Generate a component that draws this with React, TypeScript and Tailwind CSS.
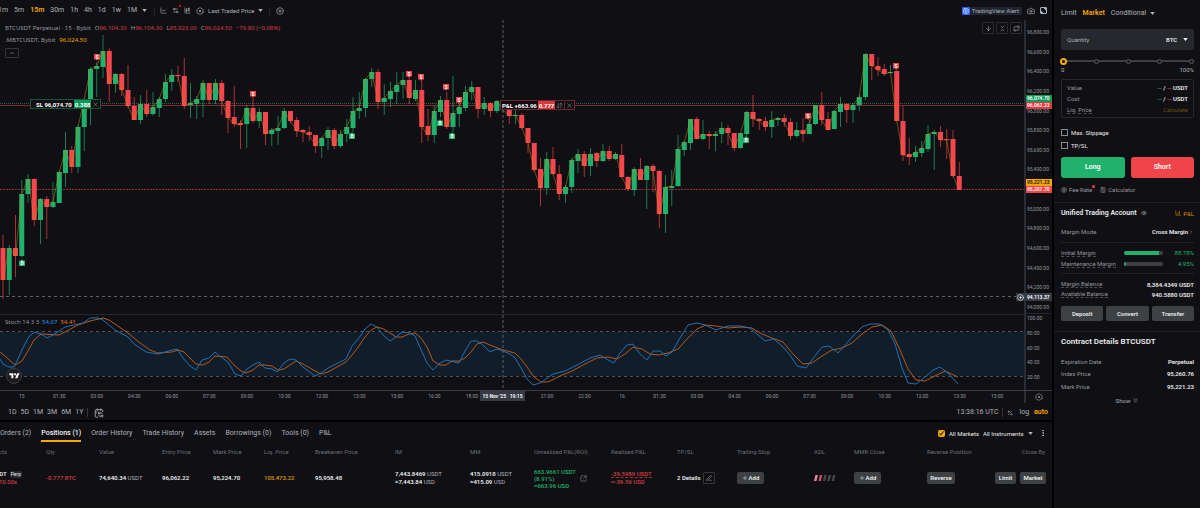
import { useState } from "react";
import type { ReactNode } from "react";
import {
  Calculator,
  CalendarSync,
  Camera,
  ChartCandlestick,
  ChartLine,
  ChevronRight,
  ChevronUp,
  ChevronsDown,
  ChevronsDownUp,
  CirclePlus,
  CircleDollarSign,
  ArrowDown,
  ArrowDownUp,
  EllipsisVertical,
  Eye,
  Grid2x2,
  Hexagon,
  Percent,
  Plus,
  Repeat,
  Settings2,
  SquareArrowOutUpRight,
  PenLine,
  ChartColumnIncreasing,
  X,
} from "lucide-react";

// high, body top, body bottom, low, direction (1 = up, 0 = down)
const candles: number[][] = [
  [235, 248, 280, 299, 0], [245, 248, 280, 295, 1], [215, 248, 256, 277, 0], [180, 194, 256, 257, 1],
  [174, 179, 194, 203, 1], [178, 179, 220, 226, 0], [198, 199, 220, 244, 1], [196, 199, 207, 239, 0],
  [182, 202, 207, 208, 1], [171, 172, 203, 203, 1], [132, 150, 173, 187, 1], [146, 150, 167, 173, 0],
  [125, 127, 167, 173, 1], [98, 99, 127, 151, 1], [67, 69, 99, 125, 1], [62, 66, 69, 97, 1],
  [35, 51, 67, 78, 1], [48, 51, 84, 102, 0], [73, 74, 84, 93, 1], [73, 74, 90, 96, 0],
  [65, 90, 106, 108, 0], [97, 106, 120, 120, 0], [95, 104, 120, 124, 1], [90, 104, 114, 117, 0],
  [92, 107, 114, 116, 1], [97, 99, 108, 117, 1], [74, 82, 99, 102, 1], [69, 75, 82, 91, 1],
  [66, 75, 76, 82, 0], [58, 76, 106, 109, 0], [83, 103, 105, 118, 1], [96, 99, 104, 119, 1],
  [80, 83, 100, 117, 1], [83, 83, 100, 104, 0], [79, 83, 100, 104, 1], [80, 83, 101, 115, 0],
  [100, 101, 118, 133, 0], [86, 117, 124, 127, 0], [120, 123, 125, 149, 0], [105, 108, 124, 148, 1],
  [98, 108, 121, 123, 0], [108, 112, 121, 128, 1], [112, 112, 134, 145, 0], [128, 130, 134, 146, 1],
  [116, 128, 131, 145, 1], [108, 111, 128, 129, 1], [111, 111, 121, 123, 0], [117, 120, 131, 137, 0],
  [129, 130, 132, 142, 0], [126, 132, 135, 141, 0], [135, 135, 146, 153, 0], [137, 138, 146, 158, 1],
  [127, 130, 138, 150, 1], [128, 130, 146, 149, 0], [130, 134, 146, 148, 1], [119, 127, 134, 142, 1],
  [97, 111, 128, 132, 1], [92, 108, 111, 119, 1], [78, 79, 108, 117, 1], [68, 72, 79, 87, 1],
  [69, 72, 102, 109, 0], [84, 98, 102, 115, 1], [82, 91, 99, 107, 1], [72, 85, 92, 104, 1],
  [72, 80, 85, 99, 1], [77, 80, 98, 104, 0], [80, 90, 99, 101, 1], [77, 90, 127, 143, 0],
  [109, 126, 135, 141, 0], [106, 111, 135, 143, 1], [96, 100, 112, 117, 1], [92, 100, 127, 129, 0],
  [76, 113, 127, 132, 1], [103, 107, 114, 127, 1], [86, 92, 108, 111, 1], [81, 87, 92, 100, 1],
  [87, 87, 109, 118, 0], [97, 103, 109, 115, 1], [102, 103, 111, 117, 0], [100, 101, 111, 113, 1],
  [100, 101, 110, 112, 0], [109, 110, 116, 124, 0], [109, 115, 116, 124, 1], [113, 115, 128, 129, 0],
  [128, 128, 143, 153, 0], [143, 143, 170, 172, 0], [158, 169, 188, 206, 0], [152, 159, 188, 195, 1],
  [147, 159, 174, 175, 0], [165, 174, 194, 200, 0], [185, 187, 194, 203, 1], [158, 160, 187, 193, 1],
  [149, 154, 161, 173, 1], [151, 154, 166, 177, 0], [148, 154, 166, 176, 1], [152, 153, 161, 167, 0],
  [144, 151, 161, 162, 1], [146, 151, 159, 161, 0], [152, 154, 159, 160, 1], [144, 155, 177, 178, 0],
  [176, 177, 189, 191, 0], [167, 169, 190, 196, 1], [158, 169, 180, 180, 0], [165, 166, 180, 209, 1],
  [164, 166, 171, 192, 0], [170, 171, 214, 228, 0], [175, 187, 214, 233, 1], [170, 186, 188, 206, 1],
  [135, 149, 186, 187, 1], [141, 142, 150, 156, 1], [119, 119, 143, 150, 1], [117, 119, 139, 139, 0],
  [120, 134, 139, 140, 1], [131, 134, 136, 149, 0], [131, 134, 136, 151, 1], [122, 128, 134, 143, 1],
  [125, 128, 133, 145, 0], [133, 133, 148, 151, 0], [133, 133, 148, 149, 1], [111, 112, 134, 137, 1],
  [95, 112, 119, 127, 0], [118, 119, 121, 130, 0], [117, 121, 127, 131, 0], [111, 120, 127, 138, 1],
  [117, 118, 120, 126, 1], [114, 118, 122, 127, 0], [118, 122, 136, 140, 0], [122, 130, 136, 138, 1],
  [118, 130, 134, 142, 0], [119, 124, 134, 134, 1], [105, 105, 124, 125, 1], [92, 105, 120, 125, 0],
  [112, 119, 130, 130, 0], [110, 111, 129, 129, 1], [97, 104, 112, 127, 1], [103, 104, 110, 123, 0],
  [103, 105, 110, 123, 1], [95, 97, 105, 111, 1], [53, 54, 97, 100, 1], [54, 54, 66, 80, 0],
  [57, 66, 70, 76, 0], [64, 69, 74, 76, 0], [65, 72, 73, 74, 1], [69, 71, 121, 121, 0],
  [106, 121, 155, 161, 0], [138, 154, 157, 165, 0], [146, 152, 157, 162, 1], [141, 148, 153, 157, 1],
  [125, 134, 149, 152, 1], [130, 132, 134, 170, 1], [126, 132, 140, 147, 0], [129, 139, 140, 159, 0],
  [130, 139, 176, 177, 0], [162, 176, 190, 190, 0],
];

const candleX = (i: number) => 3 + i * 6.25;

const closeLine = candles
  .map(([, top, bottom, , up], i) => `${candleX(i)},${up ? top : bottom}`)
  .join(" ");

const sellMarks = [[97, 57], [253, 94], [409, 74], [421, 77], [446, 87], [459, 100], [808, 116], [896, 66]];
const buyMarks = [[22, 263], [352, 136], [440, 123], [452, 136], [746, 140]];

const stochK =
  "0,359 3,364 9,367 14,367 16,363 22,350 28,338 34,332 41,334 47,338 53,335 65,327 83,323 90,318 98,318 103,320 115,330 128,337 134,344 146,352 158,354 172,350 177,349 183,358 190,366 196,370 202,360 209,358 215,352 221,357 228,362 235,374 241,376 247,369 253,365 259,362 265,368 272,369 277,372 284,363 290,359 296,360 303,367 315,376 321,373 328,368 334,365 346,359 352,346 359,338 365,329 371,324 377,327 383,335 390,341 396,337 402,332 410,333 415,336 427,363 433,370 440,363 446,360 459,363 465,351 471,341 477,341 483,345 490,352 497,349 503,351 510,354 515,358 521,368 527,379 533,385 540,383 546,379 553,374 565,371 577,365 590,358 600,355 608,360 614,363 620,353 627,345 633,344 640,354 647,360 653,351 660,351 666,356 672,352 680,338 688,325 697,323 705,325 716,330 728,326 740,326 750,328 757,334 765,341 774,339 783,347 790,355 797,366 806,368 815,356 822,347 829,346 838,353 846,344 854,335 862,327 870,324 880,324 888,330 895,344 902,368 908,383 916,384 925,377 933,370 940,367 948,373 958,384";
const stochD =
  "0,352 5,356 15,365 22,361 28,351 34,340 41,334 59,335 65,332 78,325 90,321 103,318 109,320 115,324 128,333 140,343 150,350 158,353 172,352 178,350 184,352 190,358 196,364 203,365 209,362 215,356 227,357 235,366 241,371 246,373 253,370 259,365 265,365 272,366 278,370 284,369 296,361 303,364 315,371 321,374 328,372 346,362 352,355 359,346 365,337 371,330 377,327 384,329 396,337 402,337 409,334 415,333 421,338 427,347 433,361 440,365 446,365 452,361 459,361 465,358 471,352 477,344 483,342 490,345 503,350 515,353 521,359 527,367 534,377 541,382 548,382 560,376 572,371 585,364 597,358 608,357 617,359 625,354 633,347 642,349 650,354 658,355 668,353 678,349 687,339 697,329 706,325 716,326 728,328 741,327 752,328 762,334 772,338 783,342 793,354 803,364 812,363 822,356 832,350 842,348 852,343 862,334 872,327 882,325 891,331 900,350 908,369 916,380 925,381 935,376 945,371 958,377";

const priceTicks = [
  "96,800.00", "96,600.00", "96,400.00", "96,200.00", "96,000.00", "95,800.00", "95,600.00", "95,400.00",
  "", "95,000.00", "94,800.00", "94,600.00", "94,400.00", "94,200.00", "94,000.00",
];
// the empty slot sits under the crosshair label
const timeTicks = [
  "15", "01:30", "03:00", "04:30", "06:00", "07:30", "09:00", "10:30", "12:00", "13:30", "15:00", "16:30",
  "18:00", "", "21:00", "22:30", "16", "01:30", "03:00", "04:30", "06:00", "07:30", "09:00", "10:30",
  "12:00", "13:30", "15:00",
];

const Caret = ({ className = "" }: { className?: string }) => (
  <svg viewBox="0 0 6 4" className={`h-[3px] w-[5px] shrink-0 fill-current ${className}`} aria-hidden="true">
    <path d="M0 0h6L3 4z" />
  </svg>
);

const FullScreenIcon = () => (
  <svg viewBox="0 0 14 14" className="size-[7px]" aria-hidden="true">
    <rect x="1" y="1" width="12" height="12" rx="1" fill="none" stroke="currentColor" strokeWidth="2" />
    <path d="M7 2h5v5zM2 7v5h5z" fill="currentColor" />
  </svg>
);

const GreyButton = ({ children, className = "" }: { children: ReactNode; className?: string }) => (
  <button
    className={`flex items-center justify-center rounded-[2px] bg-[#3d4144] font-semibold text-[#eaeaec] ${className}`}
  >
    {children}
  </button>
);

function ChartToolbar() {
  return (
    <div className="flex h-5 items-center overflow-hidden pt-px text-[7px] text-[#adb1b8]">
      <div className="-ml-[2px] flex items-center gap-[6px]">
        {["1m", "5m", "15m", "30m", "1h", "4h", "1d", "1w", "1M"].map((t) => (
          <button key={t} className={t === "15m" ? "font-semibold text-[#f7a600]" : ""}>
            {t}
          </button>
        ))}
      </div>
      <button aria-label="More intervals" className="ml-[5px]"><Caret /></button>
      <div className="mr-[5px] ml-[7px] h-2 w-px bg-[#25282c]" />
      <div className="flex items-center gap-[5px]">
        <button aria-label="Chart type"><ChartLine size={7} /></button>
        <button aria-label="Indicators" className="relative">
          <Settings2 size={7} />
          <span className="absolute -top-[2px] -right-[2px] size-[2px] rounded-full bg-[#ff1d1d]" />
        </button>
        <button aria-label="Candles"><ChartCandlestick size={7} /></button>
        <button aria-label="Settings" className="relative">
          <Hexagon size={8} />
          <span className="absolute top-[3px] left-[3px] size-[2px] rounded-full bg-current" />
        </button>
      </div>
      <button className="ml-[4px] flex items-center gap-[3px] text-[6px]">
        Last Traded Price <Caret />
      </button>
      <div className="mx-[6px] h-2 w-px bg-[#25282c]" />
      <button aria-label="Add alert"><CirclePlus size={8} /></button>
      <div className="ml-auto flex items-center gap-[5px] pr-[5px]">
        <button className="flex h-[8px] items-center gap-[2px] rounded-[1px] bg-[#1f2530] pr-[3px] text-[6px]">
          <span className="flex size-[8px] items-center justify-center rounded-[1px] bg-[#2962ff] text-white">
            <Grid2x2 size={6} />
          </span>
          TradingView Alert
        </button>
        <button aria-label="Snapshot"><Camera size={8} /></button>
        <button aria-label="Full screen"><FullScreenIcon /></button>
      </div>
    </div>
  );
}

function PlotArea() {
  return (
    <svg viewBox="0 20 1024 370" preserveAspectRatio="none" className="block h-full w-full" role="img" aria-label="BTCUSDT price chart">
      <rect x="0" y="332" width="1024" height="44" fill="#121d2a" />
      <line x1="0" y1="314.5" x2="1024" y2="314.5" stroke="#24262d" />
      <g stroke="#4c5159" strokeDasharray="3 3">
        <line x1="0" y1="331.5" x2="1024" y2="331.5" />
        <line x1="0" y1="376.5" x2="1024" y2="376.5" />
      </g>

      <line x1="0" y1="103.5" x2="1024" y2="103.5" stroke="#1d6b45" strokeDasharray="1 1" />
      <line x1="0" y1="105.5" x2="1024" y2="105.5" stroke="#82292f" />
      <line x1="0" y1="189.5" x2="1024" y2="189.5" stroke="#8f3035" strokeDasharray="2 1" />

      {candles.map(([high, top, bottom, low, up], i) => (
        <g key={i} fill={up ? "#20b26c" : "#f6464d"}>
          <rect x={candleX(i) - 0.5} y={high} width="1" height={low - high} opacity="0.65" />
          <rect x={candleX(i) - 2.5} y={top} width="5" height={Math.max(bottom - top, 1)} />
        </g>
      ))}
      <polyline points={closeLine} fill="none" stroke="#c98512" strokeWidth="1" opacity="0.5" />

      <polyline points={stochD} fill="none" stroke="#b4581a" strokeWidth="1" />
      <polyline points={stochK} fill="none" stroke="#2070b4" strokeWidth="1" />

      <g stroke="#5d6169">
        <line x1="503" y1="20" x2="503" y2="390" strokeDasharray="3 2" />
        <line x1="0" y1="296.5" x2="1024" y2="296.5" strokeDasharray="3 3" />
      </g>

      <g fontFamily="Roboto, sans-serif" fontSize="5" fontWeight="700" textAnchor="middle">
        {sellMarks.map(([x, y]) => (
          <g key={x}>
            <path d={`M${x - 3} ${y - 3}h6v5.500h-2l-1 1.500l-1-1.500h-2z`} fill="#ef454a" />
            <text x={x} y={y + 1.5} fill="#fff">S</text>
          </g>
        ))}
        {buyMarks.map(([x, y]) => (
          <g key={x}>
            <path d={`M${x - 3} ${y + 3}h6v-5.500h-2l-1-1.500l-1 1.500h-2z`} fill="#20b26c" />
            <text x={x} y={y + 2} fill="#fff">B</text>
          </g>
        ))}
      </g>
    </svg>
  );
}

const Ohlc = ({ name, value }: { name: string; value: string }) => (
  <span>
    {name}
    <span className="text-[#d53d43]">{value}</span>
  </span>
);

function ChartOverlays() {
  return (
    <>
      <div className="absolute top-[2px] left-[5px] flex flex-col items-start font-['Noto_Sans',sans-serif] text-[6px] leading-[12px] text-[#94979d]">
        <div className="flex gap-[4px]">
          <span>BTCUSDT Perpetual · 15 · Bybit</span>
          <Ohlc name="O" value="96,104.30" />
          <Ohlc name="H" value="96,104.30" />
          <Ohlc name="L" value="95,923.00" />
          <Ohlc name="C" value="96,024.50" />
          <span className="text-[#d53d43]">−79.80 (−0.08%)</span>
        </div>
        <div className="flex gap-[4px]">
          <span>.MBTCUSDT, Bybit</span>
          <span className="text-[#f7a600]">96,024.50</span>
        </div>
        <button aria-label="Collapse legend" className="mt-[2px] flex h-[10px] w-[14px] items-center justify-center rounded-[1px] border border-[#33363d] text-[#b4b8bf]">
          <ChevronUp size={6} />
        </button>
      </div>

      <div className="absolute top-[2px] right-[2px] flex gap-[2px] text-[#adb1b8]">
        {[ArrowDown, ChevronsDownUp, Repeat].map((Icon, i) => (
          <button key={i} aria-label={["Scroll down", "Collapse pane", "Reset"][i]} className="flex size-[12px] items-center justify-center rounded-[1px] border border-[#292c33]">
            <Icon size={7} />
          </button>
        ))}
      </div>

      <div className="absolute top-[79px] left-[30px] flex h-[10px] items-center border border-[#12583a] bg-[#101014] text-[6px] font-bold text-white">
        <span className="pr-[2px] pl-[5px]">SL 96,074.70</span>
        <span className="flex h-[8px] items-center bg-[#0c9a58] px-px">0.388</span>
        <button aria-label="Cancel stop loss" className="px-px text-[#878b92]"><X size={7} /></button>
      </div>

      <div className="absolute top-[80px] left-[500px] flex h-[10px] items-center border border-[#6d262b] bg-[#101014] text-[6px] font-bold text-white">
        <span className="px-px">P&amp;L +663.96</span>
        <span className="flex h-[8px] items-center bg-[#d93a40] px-px">0.777</span>
        <button aria-label="Reverse" className="px-px text-[#878b92]"><ArrowDownUp size={7} /></button>
        <button aria-label="Close position" className="border-l border-[#6d262b] px-px text-[#878b92]"><X size={7} /></button>
      </div>

      <div className="absolute top-[298px] left-[5px] flex gap-[3px] font-['Noto_Sans',sans-serif] text-[6px] leading-[9px] text-[#94979d]">
        <span>Stoch 14 3 3</span>
        <span className="text-[#2a8de4]">54.67</span>
        <span className="text-[#e8701a]">54.41</span>
      </div>

      <div className="absolute top-[348px] left-[6px] flex size-[16px] items-center justify-center rounded-full border border-[#3b3c40] bg-[#1d1d20]">
        <svg viewBox="0 0 36 28" className="h-[8px] w-[11px] fill-white" aria-label="TradingView">
          <path d="M14 22H7V11H0V4h14v18zM28 22h-8l7.500-18h8L28 22z" />
          <circle cx="20" cy="8" r="4" />
        </svg>
      </div>
    </>
  );
}

function PriceAxis() {
  return (
    <div className="relative w-[28px] shrink-0 border-l-2 border-[#2b2d34] text-[5px] leading-[8px] text-[#94979d]">
      <div className="flex h-[294px] flex-col justify-between border-b border-[#24262d] pt-[8px] pb-[2px] pl-px">
        {priceTicks.map((t, i) => (
          <span key={i} className="h-[8px]">{t}</span>
        ))}
      </div>
      <div className="flex h-[67px] flex-col justify-between pl-px">
        {["100.00", "80.00", "60.00", "40.00", "20.00"].map((t) => (
          <span key={t} className="h-[8px]">{t}</span>
        ))}
      </div>
      <div className="absolute top-[75px] left-0 w-full font-semibold text-white">
        <div className="h-[7px] bg-[#0c9a58] pl-px leading-[7px]">96,074.70</div>
        <div className="h-[7px] bg-[#d93a40] pl-px leading-[7px]">96,062.23</div>
      </div>
      <div className="absolute top-[159px] left-0 w-full font-semibold">
        <div className="h-[7px] bg-[#f7a600] pl-px leading-[7px] text-[#101014]">95,221.23</div>
        <div className="h-[7px] bg-[#ef454a] pl-px leading-[7px] text-white">95,207.70</div>
      </div>
      <div className="absolute top-[273px] -left-[10px] flex h-[8px] w-[36px] items-center bg-[#363a45] font-semibold text-white">
        <button aria-label="Add order at price" className="px-px"><CirclePlus size={7} /></button>
        <span className="pl-[2px]">94,113.37</span>
      </div>
    </div>
  );
}

function ChartPanel() {
  return (
    <section className="bg-[#101014]">
      <ChartToolbar />
      <div className="flex h-[370px]">
        <div className="relative min-w-0 flex-1">
          <PlotArea />
          <ChartOverlays />
        </div>
        <PriceAxis />
      </div>
      <div className="flex h-[13px] border-t border-[#3c3e45] text-[5px] leading-[8px] text-[#94979d]">
        <div className="relative flex min-w-0 flex-1 pt-px pr-[8px] pl-[3px]">
          {timeTicks.map((t, i) => (
            <span key={i} className="flex-1 text-center">{t}</span>
          ))}
          <div className="absolute top-0 left-[480px] flex h-[10px] w-[45px] items-center justify-center bg-[#363a45] font-semibold whitespace-pre text-white">
            15 Nov '25   19:15
          </div>
        </div>
        <div className="flex w-[28px] items-center justify-center border-l-2 border-[#2b2d34]">
          <button aria-label="Axis settings" className="relative">
            <Hexagon size={8} />
            <span className="absolute top-[3px] left-[3px] size-[2px] rounded-full bg-current" />
          </button>
        </div>
      </div>
      <div className="flex h-[17px] items-center px-2 pt-[2px] text-[7px] text-[#adb1b8]">
        <div className="flex gap-[4px]">
          {["1D", "5D", "1M", "3M", "6M", "1Y"].map((t) => (
            <button key={t}>{t}</button>
          ))}
        </div>
        <div className="mr-[6px] ml-[4px] h-[9px] w-px bg-[#33363d]" />
        <button aria-label="Go to date"><CalendarSync size={10} /></button>
        <span className="ml-auto">13:38:16 UTC</span>
        <div className="mx-[4px] h-[9px] w-px bg-[#33363d]" />
        <button aria-label="Percent scale"><Percent size={6} /></button>
        <button className="ml-[6px]">log</button>
        <button className="-mr-[4px] ml-[5px] font-semibold text-[#f7a600]">auto</button>
      </div>
    </section>
  );
}

const Amount = ({ value, unit }: { value: string; unit?: string }) => (
  <span className="whitespace-nowrap">
    <span className="font-semibold text-[#eaeaec]">{value}</span>
    {unit && <span className="text-[#adb1b8]"> {unit}</span>}
  </span>
);

function AdlMeter() {
  return (
    <svg viewBox="0 0 22 6" className="h-[6px] w-[22px]" role="img" aria-label="ADL rank 2 of 5">
      {["#e58fa0", "#c94a68", "#44474c", "#44474c", "#44474c"].map((c, i) => (
        <path key={i} d={`M${i * 4.4 + 1.5} 0h2.400l-1.500 6h-2.400z`} fill={c} />
      ))}
    </svg>
  );
}

function PositionsPanel() {
  const [allMarkets, setAllMarkets] = useState(true);
  const columns = [
    "Qty", "Value", "Entry Price", "Mark Price", "Liq. Price", "Breakeven Price", "IM", "MM",
    "Unrealized P&L(ROI)", "Realized P&L", "TP/SL", "Trailing Stop", "ADL", "MMR Close", "Reverse Position",
  ];

  return (
    <section className="flex-1 overflow-hidden bg-[#101014]">
      <div className="flex h-5 items-stretch overflow-hidden text-[7px] text-[#adb1b8]">
        <nav className="flex gap-[10px]">
          {["Orders (2)", "Positions (1)", "Order History", "Trade History", "Assets", "Borrowings (0)", "Tools (0)", "P&L"].map((t) => (
            <button
              key={t}
              className={
                t === "Positions (1)"
                  ? "border-b-2 border-[#f7a600] pt-[4px] font-medium text-[#f0f0f2]"
                  : "border-b-2 border-transparent pt-[4px]"
              }
            >
              {t}
            </button>
          ))}
        </nav>
        <div className="ml-auto flex items-center gap-[4px] pt-[2px] pr-[5px] text-[6px] text-[#eaeaec]">
          <input
            id="all-markets"
            type="checkbox"
            checked={allMarkets}
            onChange={(e) => setAllMarkets(e.target.checked)}
            className="size-[7px] accent-[#f7a600]"
          />
          <label htmlFor="all-markets">All Markets</label>
          <select aria-label="Instruments" className="w-[41px] appearance-none">
            <option>All Instruments</option>
          </select>
          <Caret className="text-[#adb1b8]" />
          <button aria-label="More" className="ml-[2px]"><EllipsisVertical size={8} /></button>
        </div>
      </div>

      <table className="w-full table-fixed text-left text-[6px] leading-[8px]">
        <colgroup>
          <col className="w-[46px]" />
          <col className="w-[53px]" />
          <col className="w-[63px]" />
          <col className="w-[51px]" />
          <col className="w-[51px]" />
          <col className="w-[51px]" />
          <col className="w-[80px]" />
          <col className="w-[75px]" />
          <col className="w-[64px]" />
          <col className="w-[77px]" />
          <col className="w-[66px]" />
          <col className="w-[60px]" />
          <col className="w-[77px]" />
          <col className="w-[40px]" />
          <col className="w-[73px]" />
          <col className="w-[60px]" />
          <col />
        </colgroup>
        <thead className="text-[#6a6e75]">
          <tr className="h-[19px]">
            <th className="font-normal"><span className="flex w-[7px] justify-end overflow-hidden">Contracts</span></th>
            {columns.map((c) => (
              <th key={c} className="font-normal whitespace-nowrap">{c}</th>
            ))}
            <th className="pr-[7px] text-right font-normal">Close By</th>
          </tr>
        </thead>
        <tbody>
          <tr className="h-[34px]">
            <td>
              <div className="flex w-[22px] items-center justify-end gap-[3px] overflow-hidden">
                <span className="font-semibold text-[#eaeaec]">BTCUSDT</span>
                <span className="rounded-[1px] bg-[#25282c] px-px text-[5px] leading-[7px] text-[#eaeaec]">Perp</span>
              </div>
              <div className="flex w-[17px] justify-end overflow-hidden text-[#ef454a]">10.00x</div>
            </td>
            <td className="font-medium text-[#d53d43]">-0.777 BTC</td>
            <td><Amount value="74,640.34" unit="USDT" /></td>
            <td><Amount value="96,062.22" /></td>
            <td><Amount value="95,224.70" /></td>
            <td className="font-semibold text-[#d48f06]">105,473.22</td>
            <td><Amount value="95,958.48" /></td>
            <td>
              <Amount value="7,443.8469" unit="USDT" /><br />
              <Amount value="≈7,443.84" unit="USD" />
            </td>
            <td>
              <Amount value="415.0918" unit="USDT" /><br />
              <Amount value="≈415.09" unit="USD" />
            </td>
            <td>
              <div className="flex items-center gap-[4px] leading-[7px] font-medium text-[#20b26c]">
                <div className="whitespace-nowrap">663.9661 USDT<br />(8.91%)<br />≈663.96 USD</div>
                <button aria-label="Share" className="text-[#878b92]"><SquareArrowOutUpRight size={7} /></button>
              </div>
            </td>
            <td className="font-medium text-[#d53d43]">
              <span className="border-b border-dashed border-[#a33237]">-39.5989 USDT</span><br />≈-39.59 USD
            </td>
            <td>
              <div className="flex items-center gap-[2px] font-semibold text-[#eaeaec]">
                2 Details
                <button aria-label="Edit TP/SL" className="flex size-[12px] items-center justify-center rounded-[1px] border border-[#33363d] text-[#adb1b8]">
                  <PenLine size={6} />
                </button>
              </div>
            </td>
            <td><GreyButton className="h-[12px] w-[27px] gap-px"><Plus size={6} />Add</GreyButton></td>
            <td><AdlMeter /></td>
            <td><GreyButton className="h-[12px] w-[27px] gap-px"><Plus size={6} />Add</GreyButton></td>
            <td><GreyButton className="h-[12px] w-[28px]">Reverse</GreyButton></td>
            <td>
              <div className="flex justify-end gap-[4px] pr-[6px]">
                <GreyButton className="h-[12px] w-[21px]">Limit</GreyButton>
                <GreyButton className="h-[12px] w-[26px]">Market</GreyButton>
              </div>
            </td>
          </tr>
        </tbody>
      </table>
    </section>
  );
}

const Row = ({ label, underline, children, className = "" }: {
  label: string;
  underline?: boolean;
  children: ReactNode;
  className?: string;
}) => (
  <div className={`flex items-center justify-between ${className}`}>
    <span className={underline ? "border-b border-dashed border-[#4a4d53] leading-[7px] text-[#94979d]" : "text-[#94979d]"}>
      {label}
    </span>
    <span className="font-semibold text-[#eaeaec]">{children}</span>
  </div>
);

const MarginRow = ({ label, percent, value }: { label: string; percent: number; value: string }) => (
  <div className="flex h-[11px] items-center">
    <span className="border-b border-dashed border-[#4a4d53] leading-[7px] whitespace-nowrap text-[#94979d]">{label}</span>
    <div className="ml-auto h-[4px] w-[39px] shrink-0 overflow-hidden rounded-full bg-[#3d4144]">
      <div className="h-full bg-[#20b26c]" style={{ width: `${percent}%` }} />
    </div>
    <span className="w-[31px] shrink-0 text-right text-[#20b26c]">{value}</span>
  </div>
);

function OrderForm() {
  const [size, setSize] = useState(0);

  return (
    <div className="border-b border-[#202227] pr-[6px] pb-[8px] pl-[7px]">
      <div className="flex h-[26px] items-center gap-[6px] text-[7px] text-[#adb1b8]">
        <button>Limit</button>
        <button className="font-semibold text-[#f7a600]">Market</button>
        <button className="flex items-center gap-[4px]">Conditional <Caret /></button>
      </div>

      <div className="mt-[3px] flex h-[21px] items-center rounded-[2px] bg-[#25282c] px-[6px]">
        <input aria-label="Quantity" placeholder="Quantity" className="w-0 min-w-0 flex-1 outline-none placeholder:text-[#adb1b8]" />
        <select aria-label="Unit" className="w-[13px] appearance-none font-semibold text-[#eaeaec]">
          <option>BTC</option>
        </select>
        <Caret className="ml-[4px] text-white" />
      </div>

      <div className="relative mt-[7px] flex h-[8px] items-center justify-between before:absolute before:inset-x-0 before:top-[3px] before:h-[2px] before:bg-[#3d4144]">
        {[0, 25, 50, 75, 100].map((stop) => (
          <span
            key={stop}
            className={
              stop === size
                ? "relative -ml-px size-[7px] rounded-full border-2 border-[#f7a600] bg-[#101014]"
                : "relative size-[5px] rounded-full border border-[#5b5f66] bg-[#101014]"
            }
          />
        ))}
        <input
          type="range"
          aria-label="Order size percent"
          step={25}
          value={size}
          onChange={(e) => setSize(Number(e.target.value))}
          className="absolute inset-0 w-full opacity-0"
        />
      </div>
      <div className="flex justify-between text-[#adb1b8]">
        <span>0</span>
        <span>100%</span>
      </div>

      <div className="mt-[5px] rounded-[2px] border border-[#25282c] px-[5px] py-[2px]">
        {["Value", "Cost"].map((label) => (
          <Row key={label} label={label} className="h-[11px]">
            <span className="text-[#20b26c]">--</span> / <span className="text-[#ef454a]">--</span> USDT
          </Row>
        ))}
        <Row label="Liq. Price" underline className="h-[11px]">
          <button className="font-normal text-[#6b4d0f]">Calculate</button>
        </Row>
      </div>

      <div className="mt-[8px] text-[#eaeaec]">
        {["Max. Slippage", "TP/SL"].map((label) => (
          <label key={label} className="flex h-[13px] items-center gap-[3px]">
            <input type="checkbox" className="size-[7px] appearance-none border border-[#878b92]" />
            {label}
          </label>
        ))}
      </div>

      <div className="mt-[5px] flex gap-[6px] text-[7px] font-semibold text-white">
        <button className="h-[21px] flex-1 rounded-[3px] bg-[#20b26c]">Long</button>
        <button className="h-[21px] flex-1 rounded-[3px] bg-[#ef454a]">Short</button>
      </div>

      <div className="mt-[7px] flex items-center gap-[5px] text-[#94979d]">
        <button className="flex items-center gap-[2px]">
          <CircleDollarSign size={6} /> Fee Rate
          <span className="-ml-[2px] size-[3px] self-start rounded-full bg-[#ef454a]" />
        </button>
        <button className="flex items-center gap-[2px]"><Calculator size={6} /> Calculator</button>
      </div>
    </div>
  );
}

function AccountPanel() {
  return (
    <div className="border-b border-[#202227] pt-[4px] pr-[6px] pb-[10px] pl-[7px]">
      <div className="flex h-[12px] items-center">
        <h2 className="text-[7px] font-semibold text-[#eaeaec]">Unified Trading Account</h2>
        <button aria-label="Hide balances" className="ml-[4px] text-[#adb1b8]"><Eye size={6} /></button>
        <a href="#pnl" className="ml-auto flex items-center gap-[2px] text-[#d48f06]">
          <ChartColumnIncreasing size={6} /> P&amp;L
        </a>
      </div>
      <div className="mt-[2px] flex h-[22px] items-center justify-between border-b border-[#202227]">
        <span className="text-[#94979d]">Margin Mode</span>
        <button className="flex items-center font-semibold text-[#eaeaec]">
          Cross Margin <ChevronRight size={6} className="text-[#878b92]" />
        </button>
      </div>
      <div className="border-b border-[#202227] py-[4px]">
        <MarginRow label="Initial Margin" percent={88.78} value="88.78%" />
        <MarginRow label="Maintenance Margin" percent={4.95} value="4.95%" />
      </div>
      <Row label="Margin Balance" underline className="mt-[5px] h-[10px]">8,384.4349 USDT</Row>
      <Row label="Available Balance" underline className="h-[10px]">940.5880 USDT</Row>
      <div className="mt-[7px] flex gap-[3px]">
        {["Deposit", "Convert", "Transfer"].map((t) => (
          <GreyButton key={t} className="h-[15px] flex-1">{t}</GreyButton>
        ))}
      </div>
    </div>
  );
}

function ContractDetails() {
  return (
    <div className="pt-[4px] pr-[6px] pl-[7px]">
      <h2 className="text-[8px] leading-[12px] font-semibold text-[#eaeaec]">Contract Details BTCUSDT</h2>
      <div className="mt-[7px]">
        <Row label="Expiration Date" className="h-[12px]">Perpetual</Row>
        <Row label="Index Price" className="h-[13px]">95,260.76</Row>
        <Row label="Mark Price" className="h-[12px]">95,221.23</Row>
      </div>
      <button className="mx-auto mt-[4px] flex items-center gap-[2px] text-[#adb1b8]">
        Show <ChevronsDown size={7} />
      </button>
    </div>
  );
}

export default function App() {
  return (
    <div className="flex min-h-screen gap-[2px] bg-black font-['Roboto',sans-serif] text-[6px] leading-[9px]">
      <main className="flex min-w-0 flex-1 flex-col gap-[2px]">
        <ChartPanel />
        <PositionsPanel />
      </main>
      <aside className="w-[146px] shrink-0 bg-[#101014]">
        <OrderForm />
        <AccountPanel />
        <ContractDetails />
      </aside>
    </div>
  );
}
